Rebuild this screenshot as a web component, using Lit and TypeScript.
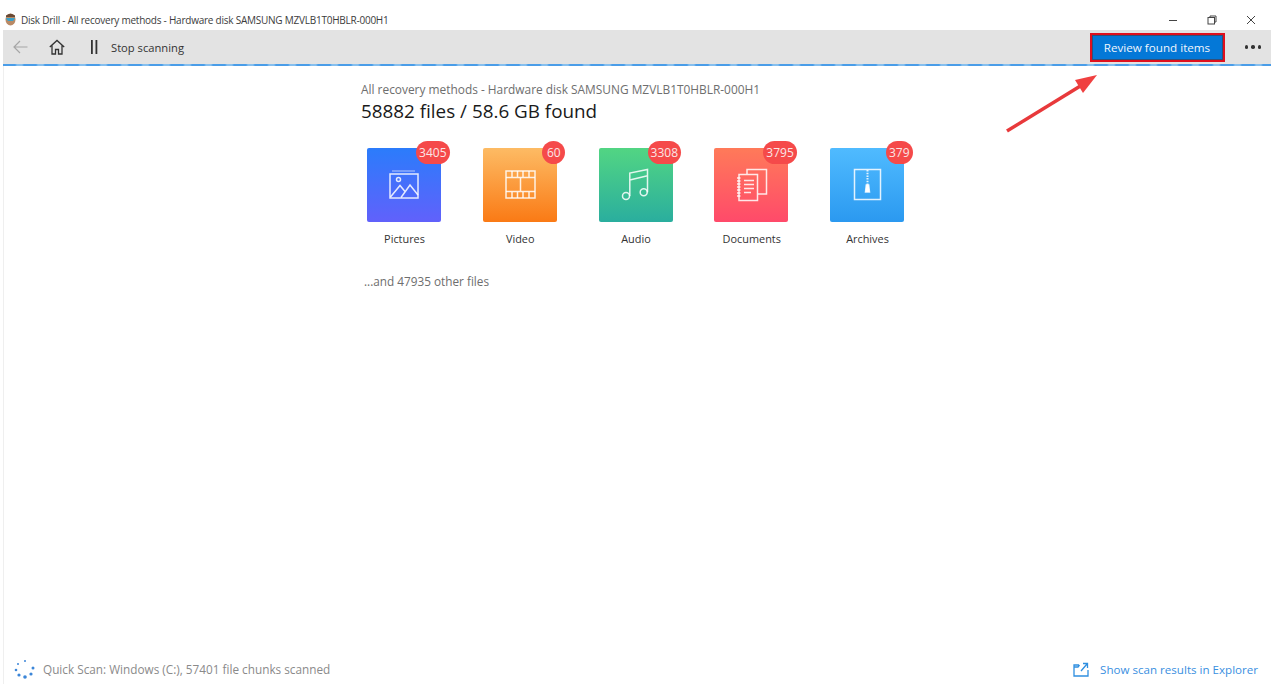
import {LitElement, html, css, svg} from 'lit';
import {customElement} from 'lit/decorators.js';

const icons = {
    pictures: svg`<path d="M3 2h23" opacity=".5"/><rect x="1" y="5" width="28" height="24"/><circle cx="9.500" cy="10.500" r="2"/><path d="M1.500 28 11 16.500l5 6M12 28.500 21 16l8 10"/>`,
    video: svg`<rect x="1" y="2" width="29" height="27"/><path d="M1 8.500h29M1 22.500h29M15.500 8.500v14M7 2v6.500M12.500 2v6.500M18 2v6.500M24 2v6.500M7 22.500V29M12.500 22.500V29M18 22.500V29M24 22.500V29"/>`,
    audio: svg`<circle cx="5" cy="27" r="3.500"/><circle cx="22.700" cy="23.300" r="3.500"/><path d="M8.800 27V4L26.500.5v22.800M8.800 11l17.700-4.300"/>`,
    documents: svg`<path d="M11 5V.5h19.500V25H22"/><rect x="3" y="5.500" width="18.500" height="26"/><path d="M1 9h3.500M1 12h3.500M1 15h3.500M1 18h3.500M1 21h3.500M1 24h3.500M1 27h3.500M8 11.500h10M8 15.500h10M8 19.500h10M8 23.500h7"/>`,
    archives: svg`<rect x="2.500" y=".5" width="26" height="30"/><path d="M15.500 1v15" stroke-dasharray="1.500 1.200" stroke-width="2"/><path d="M14.300 16h2.400l.8 7h-4z" fill="#fff"/>`,
};

const categories = [
    {name: 'Pictures', count: '3405', icon: icons.pictures, cls: 'pictures'},
    {name: 'Video', count: '60', icon: icons.video, cls: 'video'},
    {name: 'Audio', count: '3308', icon: icons.audio, cls: 'audio'},
    {name: 'Documents', count: '3795', icon: icons.documents, cls: 'documents'},
    {name: 'Archives', count: '379', icon: icons.archives, cls: 'archives'},
];

const spinnerDots = [
    [11, 3, 1], [4, 6, 1], [2, 12, 1.3], [5, 17, 1.6],
    [11, 19, 1.8], [17, 16, 1.6], [19, 10, 1.5],
];

@customElement('app-root')
export class AppRoot extends LitElement {
    static styles = css`
        :host {
            display: block;
            position: relative;
            width: 1280px;
            height: 684px;
            overflow: hidden;
            background: #fff;
            font-family: "Open Sans", "Noto Sans", sans-serif;
            color: #333;
        }

        .app {
            display: flex;
            flex-direction: column;
            height: 684px;
        }

        .titlebar {
            display: flex;
            align-items: center;
            height: 30px;
            flex: none;
            padding: 9px 0 0 5px;
            box-sizing: border-box;
            font-size: 10px;
            letter-spacing: -0.235px;
            color: #3c3c3c;
        }

        .logo {
            width: 11px;
            height: 13px;
            margin-right: 5px;
        }

        .title {
            flex: 1;
        }

        .win {
            display: flex;
            gap: 29px;
            margin-right: 24px;
        }

        .win svg {
            width: 10px;
            height: 10px;
            display: block;
            fill: none;
            stroke: #444;
            stroke-width: 1;
        }

        .toolbar {
            display: flex;
            align-items: center;
            flex: none;
            height: 34px;
            margin: 0 9px 0 3px;
            padding: 0 10px;
            background: #e3e3e3;
            font-size: 11.200px;
        }

        .back {
            width: 15px;
            height: 14px;
            fill: none;
            stroke: #a6a6a6;
            stroke-width: 1.200;
            margin-right: 21px;
        }

        .home {
            width: 16px;
            height: 16px;
            fill: none;
            stroke: #333;
            stroke-width: 1.300;
            margin-right: 26px;
        }

        .pause {
            width: 7px;
            height: 14px;
            fill: #333;
            margin-right: 13px;
        }

        .stop {
            flex: 1;
            color: #333;
        }

        .review {
            box-sizing: border-box;
            width: 135px;
            height: 29px;
            border: 2.500px solid #e0101e;
            outline: 1px solid #30507a;
            outline-offset: -3px;
            background: #0478d7;
            color: #f0f6fc;
            font: inherit;
            font-size: 11.650px;
            padding: 0;
            margin-right: 20px;
        }

        .more {
            display: flex;
            gap: 3px;
        }

        .more i {
            width: 3.500px;
            height: 3.500px;
            border-radius: 50%;
            background: #333;
        }

        .progress {
            flex: none;
            height: 2px;
            margin: 0 9px 0 3px;
            background: repeating-linear-gradient(90deg, #4a9de8 0 12px, #86bfee 14px 19px, #4a9de8 21px);
        }

        .main {
            flex: 1;
            margin-left: 3px;
            border-left: 1px solid #efefef;
            padding: 15px 0 0 357px;
        }

        .sub {
            font-size: 11.900px;
            line-height: 16px;
            color: #6e6e6e;
        }

        h1 {
            margin: 2px 0 0;
            font-weight: 400;
            font-size: 18.850px;
            line-height: 25px;
            color: #1a1a1a;
        }

        .grid {
            display: flex;
            margin: 24px 0 0 6px;
        }

        .cat {
            width: 74px;
            margin-right: 41.750px;
            display: flex;
            flex-direction: column;
            align-items: center;
        }

        .tile {
            position: relative;
            width: 74px;
            height: 74px;
            border-radius: 2px;
            display: flex;
            align-items: center;
            justify-content: center;
        }

        .tile svg {
            width: 30px;
            height: 32px;
            fill: none;
            stroke: #fff;
            stroke-opacity: .85;
            stroke-width: 1.500;
            overflow: visible;
        }

        .pictures { background: linear-gradient(#2b7cfb, #6161fb); }
        .video { background: linear-gradient(#fdbb64, #fa7a15); }
        .audio { background: linear-gradient(#52d583, #2aae9e); }
        .documents { background: linear-gradient(#ff7a59, #ff4a6a); }
        .archives { background: linear-gradient(#50bbff, #2b99f0); }

        .badge {
            position: absolute;
            top: -7px;
            right: -8.500px;
            box-sizing: border-box;
            min-width: 23px;
            height: 23px;
            padding: 0 3px;
            border-radius: 12px;
            background: #f54a4a;
            color: #fbe6e6;
            font-size: 12px;
            line-height: 23px;
            text-align: center;
        }

        .label {
            margin-top: 9px;
            padding-left: 1px;
            font-size: 10.900px;
            line-height: 16px;
            white-space: nowrap;
            color: #333;
        }

        .other {
            margin: 26px 0 0 3px;
            font-size: 11.770px;
            line-height: 16px;
            color: #6e6e6e;
        }

        .footer {
            display: flex;
            align-items: center;
            flex: none;
            height: 30px;
            margin-left: 3px;
            border-left: 1px solid #efefef;
            padding: 0 22px 0 10px;
        }

        .spinner {
            width: 22px;
            height: 22px;
            margin-right: 7px;
            fill: #3c86d8;
        }

        .status {
            flex: 1;
            font-size: 11.770px;
            color: #8a8a8a;
        }

        .explorer {
            width: 16px;
            height: 15px;
            margin-right: 11px;
            fill: none;
            stroke: #2f8fe0;
            stroke-width: 1.300;
        }

        .link {
            font-size: 11.580px;
            color: #3a8fdf;
        }

        .arrow {
            position: absolute;
            left: 1000px;
            top: 70px;
            width: 105px;
            height: 70px;
        }
    `;

    render() {
        return html`
            <div class="app">
                <div class="titlebar">
                    <svg class="logo" viewBox="0 0 11 13">
                        <ellipse cx="5.500" cy="6.500" rx="5" ry="6" fill="#b98a66"/>
                        <path d="M1 2.500Q5.500-1 10 2.500V4H1z" fill="#6a4a35"/>
                        <path d="M.8 5h9.400L8 8H3z" fill="#3aa0c8"/>
                    </svg>
                    <span class="title">Disk Drill - All recovery methods - Hardware disk SAMSUNG MZVLB1T0HBLR-000H1</span>
                    <div class="win">
                        <svg viewBox="0 0 10 10"><path d="M1 5.500h8"/></svg>
                        <svg viewBox="0 0 10 10"><rect x="1" y="2.500" width="6.500" height="6.500"/><path d="M3 2.500V1h6v6H7.500"/></svg>
                        <svg viewBox="0 0 10 10"><path d="M1 1l8 8M9 1l-8 8"/></svg>
                    </div>
                </div>
                <div class="toolbar">
                    <svg class="back" viewBox="0 0 15 14"><path d="M14.500 7H1M7 1 1 7l6 6"/></svg>
                    <svg class="home" viewBox="0 0 16 16"><path d="M.8 8 8 1.500 15.200 8M3 6.500V15h3.500v-4.500h3V15H13V6.500"/></svg>
                    <svg class="pause" viewBox="0 0 7 14"><rect x="0" y="0" width="1.800" height="14"/><rect x="4.500" y="0" width="1.800" height="14"/></svg>
                    <span class="stop">Stop scanning</span>
                    <button class="review">Review found items</button>
                    <div class="more"><i></i><i></i><i></i></div>
                </div>
                <div class="progress"></div>
                <div class="main">
                    <div class="sub">All recovery methods - Hardware disk SAMSUNG MZVLB1T0HBLR-000H1</div>
                    <h1>58882 files / 58.6 GB found</h1>
                    <div class="grid">
                        ${categories.map((c) => html`
                            <div class="cat">
                                <div class="tile ${c.cls}">
                                    <svg viewBox="0 0 30 32">${c.icon}</svg>
                                    <span class="badge">${c.count}</span>
                                </div>
                                <div class="label">${c.name}</div>
                            </div>`)}
                    </div>
                    <div class="other">...and 47935 other files</div>
                </div>
                <div class="footer">
                    <svg class="spinner" viewBox="0 0 22 22">
                        ${spinnerDots.map(([x, y, r]) => svg`<circle cx="${x}" cy="${y}" r="${r}"/>`)}
                    </svg>
                    <span class="status">Quick Scan: Windows (C:), 57401 file chunks scanned</span>
                    <svg class="explorer" viewBox="0 0 16 15"><path d="M6 3H1v11h14V8M1 5h4l1.500-2M8 9l6-7M10 1.500h4.500V6"/></svg>
                    <span class="link">Show scan results in Explorer</span>
                </div>
            </div>
            <svg class="arrow" viewBox="0 0 105 70">
                <path d="M7 61 L82 15" stroke="#e8393b" stroke-width="3.500" fill="none"/>
                <path d="M97 5 L75 10 L83 23 Z" fill="#f04040"/>
            </svg>
        `;
    }
}

declare global {
    interface HTMLElementTagNameMap {
        'app-root': AppRoot;
    }
}
